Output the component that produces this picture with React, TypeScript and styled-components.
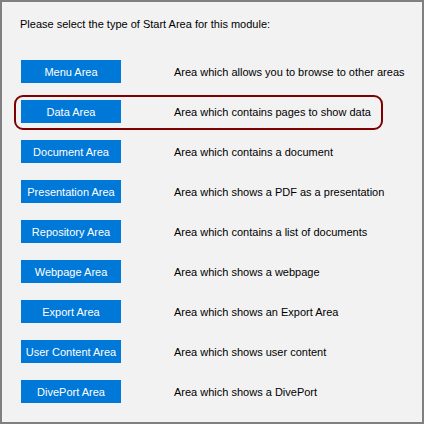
import React from "react";
import styled, { createGlobalStyle } from "styled-components";

const Global = createGlobalStyle`
  html, body { margin: 0; padding: 0; background: #f2f2f2; }
  * { box-sizing: border-box; }
`;

const Frame = styled.div`
  width: 424px;
  height: 424px;
  border: 2px solid #808080;
  background: #f2f2f2;
  font-family: "Liberation Sans", Arial, sans-serif;
  font-size: 11px;
  color: #000;
  padding: 14px 0 0 19px;
`;

const Title = styled.div`
  height: 16px;
  line-height: 16px;
  margin-left: -1px;
`;

const List = styled.div`
  margin-top: 28px;
  display: flex;
  flex-direction: column;
  gap: 17px;
`;

const Row = styled.div<{ $highlight?: boolean }>`
  position: relative;
  display: flex;
  align-items: center;
  gap: 53px;
  height: 23px;
  &::before {
    content: "";
    display: ${(p) => (p.$highlight ? "block" : "none")};
    position: absolute;
    left: -7px;
    top: -5px;
    width: 365px;
    height: 31px;
    border: 2px solid #7f0000;
    border-radius: 9px;
    pointer-events: none;
  }
`;

const AreaButton = styled.div`
  flex: 0 0 100px;
  width: 100px;
  height: 23px;
  background: #0078d7;
  color: #fff;
  display: flex;
  align-items: center;
  justify-content: center;
  white-space: nowrap;
`;

const Desc = styled.div`
  white-space: nowrap;
`;

const items = [
  ["Menu Area", "Area which allows you to browse to other areas"],
  ["Data Area", "Area which contains pages to show data"],
  ["Document Area", "Area which contains a document"],
  ["Presentation Area", "Area which shows a PDF as a presentation"],
  ["Repository Area", "Area which contains a list of documents"],
  ["Webpage Area", "Area which shows a webpage"],
  ["Export Area", "Area which shows an Export Area"],
  ["User Content Area", "Area which shows user content"],
  ["DivePort Area", "Area which shows a DivePort"],
];

export default function App() {
  return (
    <>
      <Global />
      <Frame>
        <Title>Please select the type of Start Area for this module:</Title>
        <List>
          {items.map(([b, d]) => (
            <Row key={b} $highlight={b === "Data Area"}>
              <AreaButton>{b}</AreaButton>
              <Desc>{d}</Desc>
            </Row>
          ))}
        </List>
      </Frame>
    </>
  );
}
